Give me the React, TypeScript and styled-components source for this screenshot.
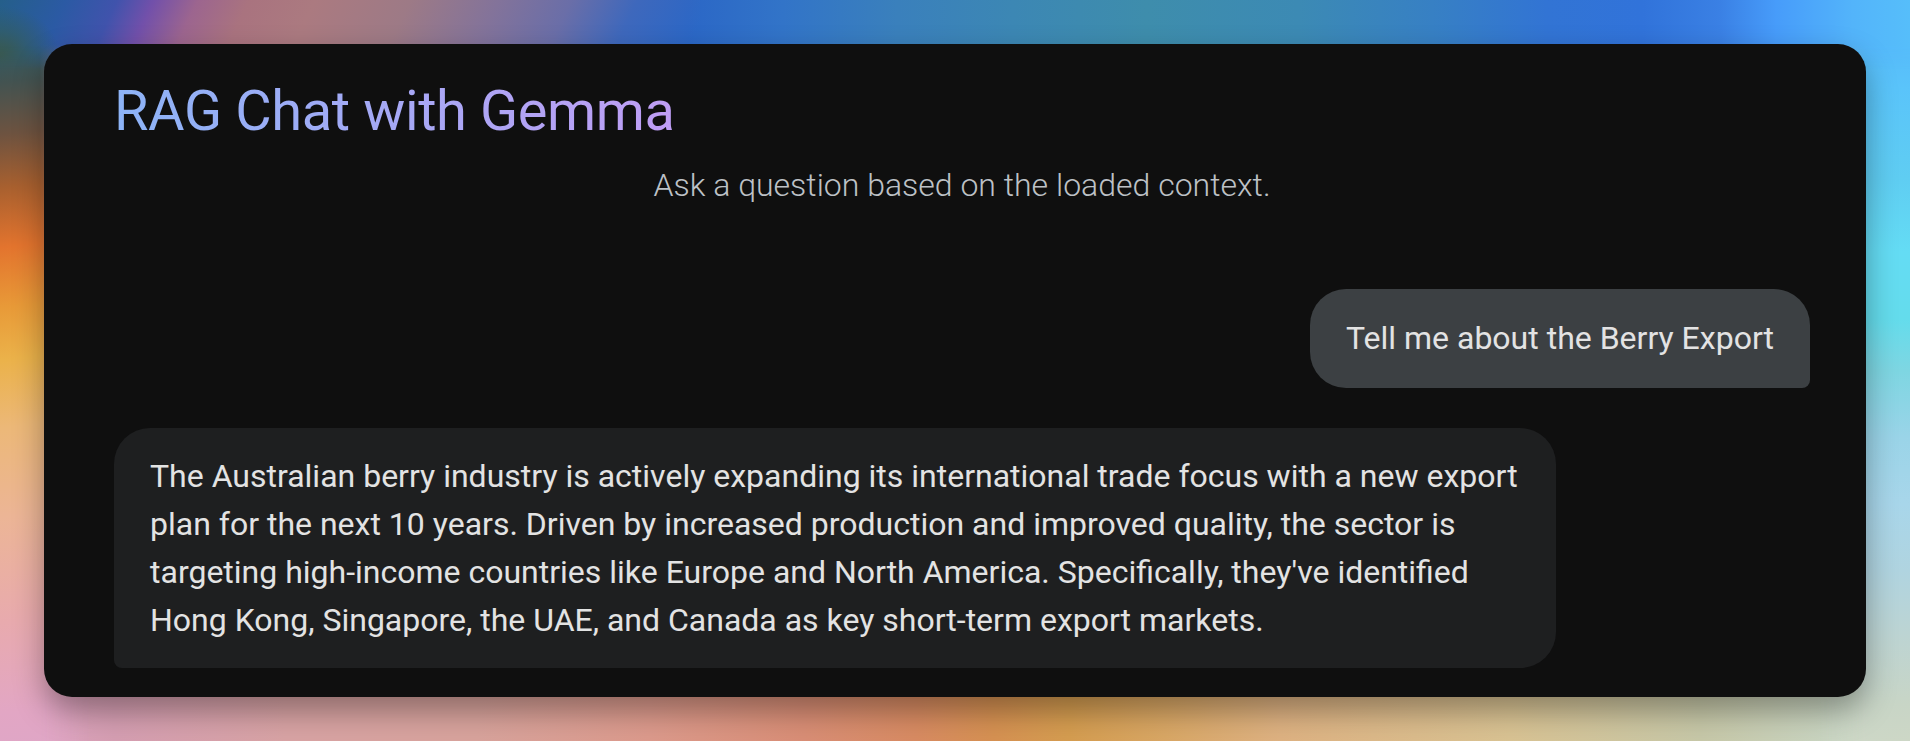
import React from "react";
import styled, { createGlobalStyle } from "styled-components";

const GlobalStyle = createGlobalStyle`
  *, *::before, *::after { box-sizing: border-box; }
  body { margin: 0; font-family: Roboto, sans-serif; }
`;

const Page = styled.main`
  position: relative;
  isolation: isolate;
  width: 1910px;
  height: 741px;
  padding: 44px;
  overflow: hidden;
  background: linear-gradient(90deg,
    #e2a6c6 0%, #d59eb2 6%, #d8a3a4 15%, #d8a39c 25%, #dc9a8c 34%, #d98e76 42%, #d88b62 48%,
    #d69152 52%, #d59d50 56%, #d9a765 61%, #deb282 67%, #d9c393 79%, #c7c8a8 89%, #c9d5c2 96%,
    #cdd9c6 100%);
`;

const Glow = styled.div`
  position: absolute;
  z-index: -1;
  inset: 0;
`;

const TopGlow = styled(Glow)`
  bottom: auto;
  height: 70px;
  background:
    radial-gradient(60px 50px at 0 56px, #3b5848 0%, rgba(52, 92, 90, 0.6) 50%, transparent 100%) no-repeat,
    linear-gradient(115deg, #255f8a 0%, #2b5aa4 9%, #4053ac 16%, #7250aa 21%, #9c658f 27%,
      #a9737f 34%, #ab7a80 43%, #9d7a86 56%, #83739a 68%, #6a6ea8 78%, #3e68bc 87%,
      rgba(43, 103, 198, 0) 97%) 0 0 / 700px 70px no-repeat,
    linear-gradient(90deg, #2b67c6 0%, #2b67c6 36%, #3274c8 41%, #3a80bc 47%, #3c87b4 53%,
      #3e8dac 60%, #3c8ab4 68%, #3780c4 75%, #3274d4 81%, #3173da 86%, #3a80e4 90%,
      #479cfa 93%, #53b4fa 97%, #56befa 100%);
  mask-image: linear-gradient(#000 64%, transparent);
`;

const LeftGlow = styled(Glow)`
  right: auto;
  width: 90px;
  background: linear-gradient(174deg,
    #255f88 0%, #2c5c68 5%, #435351 11%, #6e5340 18%, #a8602f 25%, #e3742e 33%, #e89a38 41%,
    #ebb24a 48%, #ecb878 57%, #ecb596 69%, #e8aaae 83%, #e2a6c4 95%, #dfa6c6 100%);
  mask-image: linear-gradient(90deg, #000 44%, transparent);
`;

const RightGlow = styled(Glow)`
  left: auto;
  width: 90px;
  background: linear-gradient(#52b2fa 0%, #5ac4fa 12%, #5fcdf2 24%, #64dcf4 34%, #64dcec 43%,
    #7ed6e2 50%, #9ad4e8 59%, #a8d6ea 68%, #b0d4e0 77%, #bdd4d2 86%, #c8d5c6 95%, #cdd7c6 100%);
  mask-image: linear-gradient(270deg, #000 50%, transparent);
`;

const Panel = styled.section`
  height: 653px;
  padding: 32px 56px 0 70px;
  border-radius: 28px;
  background: #0f0f0f;
  box-shadow: 0 14px 30px rgba(0, 0, 0, 0.34);
`;

const Title = styled.h1`
  width: fit-content;
  margin: 0;
  font-size: 56px;
  font-weight: 400;
  line-height: 70px;
  letter-spacing: -0.39px;
  color: transparent;
  background: linear-gradient(74deg, #8cb4f7, #c09df4);
  background-clip: text;
`;

const Subtitle = styled.p`
  margin: 15px 0 0;
  font-size: 32px;
  font-weight: 300;
  line-height: 48px;
  text-align: center;
  color: #bdc1c6;
`;

const Messages = styled.div`
  display: flex;
  flex-direction: column;
  gap: 40px;
  padding-top: 80px;
`;

const Bubble = styled.p<{ $mine?: boolean }>`
  align-self: ${(p) => (p.$mine ? "flex-end" : "flex-start")};
  width: ${(p) => (p.$mine ? "500px" : "1442px")};
  margin: 0;
  padding: ${(p) => (p.$mine ? "25px 36px 26px" : "24px 36px")};
  border-radius: ${(p) => (p.$mine ? "36px 36px 8px 36px" : "36px 36px 36px 8px")};
  background: ${(p) => (p.$mine ? "#3c4043" : "#1e1f20")};
  color: #e3e3e3;
  font-size: 32px;
  line-height: 48px;
  white-space: nowrap;
`;

const answer = [
  "The Australian berry industry is actively expanding its international trade focus with a new export",
  "plan for the next 10 years. Driven by increased production and improved quality, the sector is",
  "targeting high-income countries like Europe and North America. Specifically, they've identified",
  "Hong Kong, Singapore, the UAE, and Canada as key short-term export markets.",
];

export default function App() {
  return (
    <Page>
      <GlobalStyle />
      <RightGlow />
      <LeftGlow />
      <TopGlow />
      <Panel>
        <Title>RAG Chat with Gemma</Title>
        <Subtitle>Ask a question based on the loaded context.</Subtitle>
        <Messages>
          <Bubble $mine>Tell me about the Berry Export</Bubble>
          <Bubble>
            {answer.map((line, i) => (
              <React.Fragment key={line}>
                {i > 0 && <br />}
                {line}
              </React.Fragment>
            ))}
          </Bubble>
        </Messages>
      </Panel>
    </Page>
  );
}
